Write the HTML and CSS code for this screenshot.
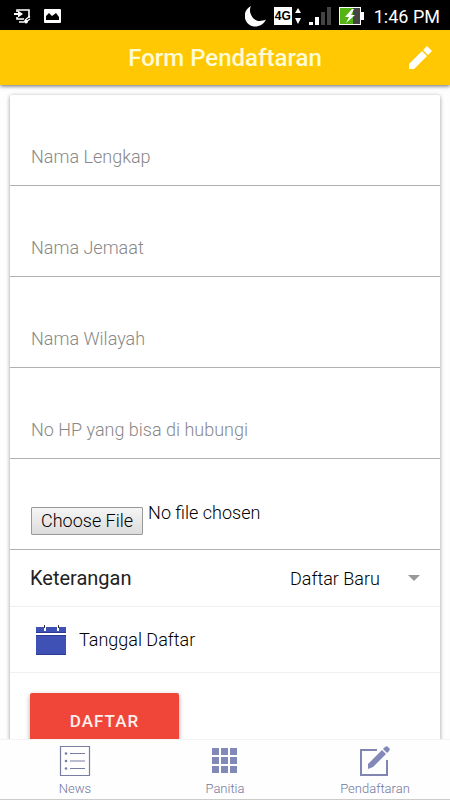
FILE: index.html
```html
<!DOCTYPE html>
<html lang="id">
<head>
<meta charset="utf-8">
<meta name="viewport" content="width=device-width, initial-scale=1">
<title>Form Pendaftaran</title>
<link rel="stylesheet" href="styles.css">
</head>
<body>
<div class="status">
  <div class="status-group">
    <svg width="18" height="16" viewBox="0 0 18 16" fill="none" stroke="#fff" stroke-width="1.6"><path d="M3 4V2h12v8M3 9v2h7M5 14h5"/><path d="M0 5h4V2.500L9 6 4 9.500V7H0z" fill="#fff" stroke="none"/><path d="m11 12 5-4M12 14l4-3" stroke-width="1.200"/><circle cx="12" cy="13.500" r="2" fill="#fff" stroke="none"/></svg>
    <svg width="17" height="14" viewBox="0 0 17 14"><rect width="17" height="14" rx="1" fill="#fff"/><path d="M2 11V7l3-3 3 3 4-3 3 4v3z" fill="#000"/></svg>
  </div>
  <div class="status-group status-right">
    <svg width="21" height="21" viewBox="0 0 21 21"><path d="M6 0C-2 4-2 14 4 18.500c5 4 14 2 17-5C15 16 11 15 8 12 5 8 4 4 6 0z" fill="#fff"/></svg>
    <span class="network"><span class="badge">4G</span><svg width="6" height="16" viewBox="0 0 6 16"><path d="M3 0l3 5H0zM0 10h6l-3 6z" fill="#fff"/></svg></span>
    <svg width="22" height="18" viewBox="0 0 22 18"><path d="M0 15h4v3H0zM6 10h4v8H6z" fill="#fff"/><path d="M12 5h4v13h-4zM18 0h4v18h-4z" fill="#444"/></svg>
    <svg width="25" height="18" viewBox="0 0 25 18"><path d="M0 0h22v5h3v8h-3v5H0z" fill="#fff"/><path d="M1 1h13v16H1z" fill="#55b414"/><path d="M14 1h7v16h-7z" fill="#444"/><path d="M13 2 6 10h4l-3 6 9-8h-4l3-6z" fill="#fff"/></svg>
    <span class="clock">1:46 PM</span>
  </div>
</div>
<header class="bar">
  <h1>Form Pendaftaran</h1>
  <button class="edit" type="button" aria-label="Edit"><svg width="24" height="24" viewBox="0 0 24 24" fill="#fff"><path d="M1 18v5h5L19 10 14 5zM15 4l5 5 3-3c1-1 1-1 0-2l-3-3c-1-1-1-1-2 0z"/></svg></button>
</header>
<main>
  <form class="card">
    <div class="field"><input type="text" placeholder="Nama Lengkap" aria-label="Nama Lengkap"></div>
    <div class="field"><input type="text" placeholder="Nama Jemaat" aria-label="Nama Jemaat"></div>
    <div class="field"><input type="text" placeholder="Nama Wilayah" aria-label="Nama Wilayah"></div>
    <div class="field"><input type="tel" placeholder="No HP yang bisa di hubungi" aria-label="No HP yang bisa di hubungi"></div>
    <div class="field">
      <label class="file" for="file">
        <span class="file-button">Choose File</span>
        <span class="file-name">No file chosen</span>
        <input type="file" id="file">
      </label>
    </div>
    <div class="choice">
      <label for="ket">Keterangan</label>
      <div class="picker"><select id="ket"><option>Daftar Baru</option></select><svg width="12" height="6" viewBox="0 0 12 6"><path d="M0 0h12L6 6z" fill="#999"/></svg></div>
    </div>
    <button class="date" type="button">
      <svg width="30" height="30" viewBox="0 0 30 30"><path d="M0 2h30v6H0zM0 10h30v20H0z" fill="#3f51b5"/><path d="M0 7h30v1H0zM0 10h30v1H0zM0 29h30v1H0z" fill="#2c3a94"/><path d="M8 0h2v6H8zM21 0h2v6h-2z" fill="#fff"/><path d="M8 0h1v3H8zM22 0h1v3h-1z" fill="#333"/></svg>
      <span>Tanggal Daftar</span>
    </button>
    <button class="submit" type="submit">DAFTAR</button>
  </form>
</main>
<nav>
  <a href="#news"><svg width="32" height="32" viewBox="0 0 32 32" fill="none" stroke="#777da3"><path d="M1.500 1.500h29v29h-29z" stroke-width="1.200"/><path d="M11 8.500h15M11 16h15M11 23.500h15" stroke-width="1.200"/><g fill="#777da3" stroke="none"><circle cx="7" cy="8.500" r="1.300"/><circle cx="7" cy="16" r="1.300"/><circle cx="7" cy="23.500" r="1.300"/></g></svg>News</a>
  <a href="#panitia"><svg width="32" height="32" viewBox="0 0 32 32" fill="#8288b8"><path d="M3 3h7v7H3zM12 3h7v7h-7zM21 3h7v7h-7zM3 12h7v7H3zM12 12h7v7h-7zM21 12h7v7h-7zM3 21h7v7H3zM12 21h7v7h-7zM21 21h7v7h-7z"/></svg>Panitia</a>
  <a href="#pendaftaran"><svg width="32" height="32" viewBox="0 0 32 32"><path d="M18 5H2v25h26V15" fill="none" stroke="#8086b0" stroke-width="2"/><path d="M9 24v-5L23 5l4 4-13 13zM24 4l2-2c1-1 2-1 3 0l1 1c1 1 1 2 0 3l-2 2z" fill="#8288b8"/></svg>Pendaftaran</a>
</nav>
</body>
</html>
```
FILE: styles.css
```css
* { box-sizing: border-box; }

body {
  margin: 0;
  height: 100vh;
  display: flex;
  flex-direction: column;
  background: #fefefe;
  color: #000;
  font-family: Roboto, sans-serif;
  font-size: 18px;
  font-weight: 300;
}

svg { display: block; flex: none; }
button, input, select { font: inherit; color: inherit; border: 0; padding: 0; background: none; }

.status {
  flex: none;
  height: 30px;
  padding: 2px 10px 0 14px;
  display: flex;
  align-items: center;
  justify-content: space-between;
  background: #000;
  color: #fff;
}
.status-group { display: flex; align-items: center; gap: 12px; }
.status-right { gap: 8px; }
.network { display: flex; align-items: center; gap: 3px; }
.badge {
  width: 18px;
  height: 18px;
  background: #fff;
  color: #000;
  font: bold 12px/18px "Liberation Sans", sans-serif;
  text-align: center;
}
.clock { font-weight: 400; padding-left: 2px; }

.bar {
  flex: none;
  height: 55px;
  padding: 0 18px;
  display: grid;
  grid-template-columns: 1fr auto 1fr;
  align-items: center;
  background: #ffc803;
  color: #fffbd5;
  box-shadow: 0 1px 4px rgba(0, 0, 0, .6);
  z-index: 1;
}
.bar h1 { grid-column: 2; margin: 0; font-size: 24px; font-weight: 500; }
.edit { justify-self: end; }

main { flex: 1; min-height: 0; overflow: hidden; padding: 10px; }

.card {
  background: #fff;
  border-radius: 2px;
  box-shadow: 0 1px 4px rgba(0, 0, 0, .4);
}
.field {
  height: 91px;
  padding: 0 21px 14px;
  display: flex;
  align-items: flex-end;
  border-bottom: 1px solid #b0b0b0;
}
.field input { width: 100%; height: 30px; outline: 0; }
.field input::placeholder { color: #888; opacity: 1; }

.file {
  position: relative;
  display: flex;
  align-items: flex-end;
  gap: 5px;
}
.file input {
  position: absolute;
  inset: 0;
  height: 100%;
  opacity: 0;
}
.file-button {
  padding: 0 9px;
  border: 1px solid #999;
  border-radius: 1px;
  background: linear-gradient(#f5f5f5, #dcdcdc);
  line-height: 26px;
}
.file-name { padding-bottom: 12px; line-height: 20px; }

.choice {
  height: 57px;
  padding: 0 20px;
  display: flex;
  align-items: center;
  justify-content: space-between;
  border-bottom: 1px solid #f0f0f0;
}
.choice label { color: #222; font-size: 20px; font-weight: 400; }
.picker { display: flex; align-items: center; gap: 28px; }
.picker select { appearance: none; }

.date {
  width: 100%;
  height: 66px;
  padding: 0 26px;
  display: flex;
  align-items: center;
  gap: 13px;
  border-bottom: 1px solid #f0f0f0;
}
.submit {
  width: 149px;
  height: 56px;
  margin: 20px;
  border-radius: 2px;
  background: #f04639;
  color: #fff0ee;
  font-size: 17px;
  font-weight: 500;
  letter-spacing: 1px;
  box-shadow: 0 2px 5px rgba(0, 0, 0, .35);
}

nav {
  flex: none;
  height: 61px;
  padding-top: 5px;
  display: grid;
  grid-template-columns: repeat(3, 1fr);
  background: #fefefe;
  border-top: 1px solid #f4f4f4;
  border-bottom: 1px solid #ccc;
  z-index: 1;
}
nav a {
  display: flex;
  flex-direction: column;
  align-items: center;
  gap: 4px;
  color: #73779c;
  font-size: 13px;
  line-height: 15px;
  text-decoration: none;
}
```
